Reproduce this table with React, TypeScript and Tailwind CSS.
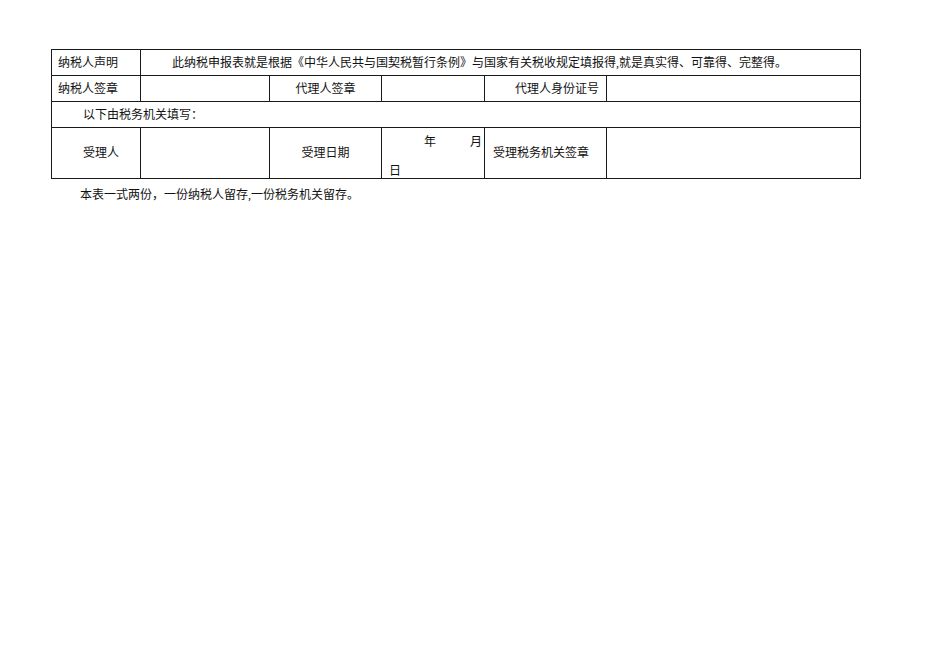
export default function App() {
  const cell = "border border-[#1a1a1a] p-0 align-middle";
  return (
    <div
      className="min-h-[672px] w-[950px] bg-white pl-[51px] pt-[49px] text-[12px] leading-[14px] text-[#111]"
      style={{ fontFamily: '"Liberation Serif", "Noto Sans CJK SC", serif' }}
    >
      <table className="w-[809px] table-fixed border-collapse">
        <colgroup>
          <col className="w-[89px]" />
          <col className="w-[129px]" />
          <col className="w-[112px]" />
          <col className="w-[103px]" />
          <col className="w-[122px]" />
          <col className="w-[254px]" />
        </colgroup>
        <tbody>
          {/* 声明 */}
          <tr className="h-[26px]">
            <td className={`${cell} pl-[6px]`}>纳税人声明</td>
            <td className={`${cell} pl-[31px]`} colSpan={5}>
              此纳税申报表就是根据《中华人民共与国契税暂行条例》与国家有关税收规定填报得,就是真实得、可靠得、完整得。
            </td>
          </tr>

          {/* 签章 */}
          <tr className="h-[26px]">
            <td className={`${cell} pl-[6px]`}>纳税人签章</td>
            <td className={cell}></td>
            <td className={`${cell} text-center`}>代理人签章</td>
            <td className={cell}></td>
            <td className={`${cell} pr-[7px] text-right`}>代理人身份证号</td>
            <td className={cell}></td>
          </tr>

          <tr className="h-[26px]">
            <td className={`${cell} pl-[31px]`} colSpan={6}>
              以下由税务机关填写：
            </td>
          </tr>

          {/* 受理 */}
          <tr className="h-[49px]">
            <td className={`${cell} pl-[31px]`}>受理人</td>
            <td className={cell}></td>
            <td className={`${cell} text-center`}>受理日期</td>
            <td className={`${cell} align-top`}>
              <div className="flex flex-col gap-[15px] pt-[7px]">
                <div className="flex pl-[42px]">
                  <span>年</span>
                  <span className="pl-[34px]">月</span>
                </div>
                <div className="pl-[7px]">日</div>
              </div>
            </td>
            <td className={`${cell} pl-[8px]`}>受理税务机关签章</td>
            <td className={cell}></td>
          </tr>
        </tbody>
      </table>
      <p className="pl-[29px] pt-[9px]">本表一式两份，一份纳税人留存,一份税务机关留存。</p>
    </div>
  );
}
